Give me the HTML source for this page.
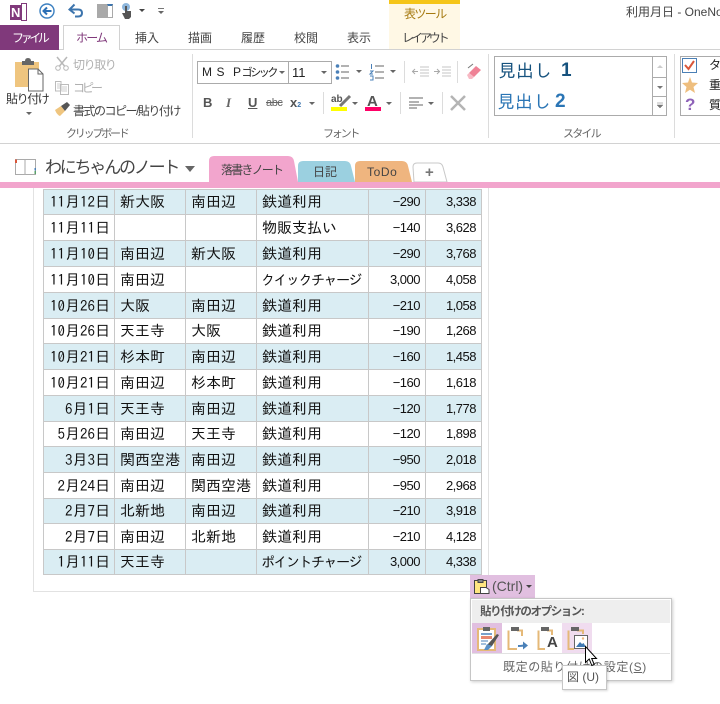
<!DOCTYPE html>
<html lang="ja"><head><meta charset="utf-8"><title>利用月日 - OneNote</title>
<style>
html,body{margin:0;padding:0;background:#fff}
#p{position:relative;width:720px;height:704px;overflow:hidden;background:#fff;font-family:"Liberation Sans","Noto Sans CJK JP",sans-serif;color:#444}
.a{position:absolute;white-space:nowrap}
.t{font-size:12px;line-height:16px}
.g{color:#b0b0b0}
.vl{position:absolute;width:1px;background:#dcdcdc}
.tri{position:absolute;width:0;height:0;border-left:3px solid transparent;border-right:3px solid transparent;border-top:3px solid #666}
svg{position:absolute;overflow:visible}
#tb{position:absolute;left:43px;top:189px;border-collapse:collapse;table-layout:fixed;width:438px;font-family:"IPAGothic","Noto Sans CJK JP",sans-serif;font-size:15px;color:#111}
#tb td{border:1px solid #c8c8c8;padding:0 0 0 5px;height:25px;box-sizing:border-box;white-space:nowrap;overflow:hidden;line-height:20px}
#tb tr{height:26px}#tb tr.s{height:25px}
#tb tr:nth-child(odd) td{background:#daedf3}
#tb td.d{text-align:right;padding:0 4px 0 0}
#tb td.n{text-align:right;padding:0 5px 0 0;font-family:"Liberation Sans",sans-serif;font-size:13px;letter-spacing:-.5px}
#tb td.k{font-size:14px;padding-left:4px;letter-spacing:-1.5px}
</style></head><body><div id="p">

<!-- QAT -->
<div class="a" style="left:10px;top:5px;width:15px;height:15px;background:#80397b"></div>
<div class="a" style="left:21px;top:3px;width:6px;height:18px;background:#fff;border:1px solid #80397b;box-sizing:border-box"></div>
<div class="a" style="left:11px;top:4px;font-size:13px;line-height:18px;font-weight:bold;color:#fff">N</div>
<svg style="left:39px;top:3px" width="17" height="17" viewBox="0 0 17 17"><circle cx="8" cy="8" r="7" fill="#fff" stroke="#3b7fc0" stroke-width="1.4"/><path d="M12.5 8H5M8 4.5 4.5 8 8 11.5" fill="none" stroke="#2b6fb5" stroke-width="2"/></svg>
<svg style="left:68px;top:3px" width="17" height="16" viewBox="0 0 17 16"><path d="M2 6.5H10Q14 6.500 14 10Q14 13.500 10 13.500H7" fill="none" stroke="#3c74ad" stroke-width="2"/><path d="M6.500 1.500 1.500 6.500 6.500 10.500" fill="none" stroke="#3c74ad" stroke-width="2"/></svg>
<div class="a" style="left:97px;top:4px;width:10px;height:14px;background:#a9a9a9"></div>
<div class="a" style="left:107px;top:4px;width:6px;height:14px;background:#fff;border:1px solid #a9a9a9;border-top:2px solid #3c74ad;box-sizing:border-box"></div>
<svg style="left:120px;top:2px" width="14" height="18" viewBox="0 0 14 18"><circle cx="6" cy="5" r="4" fill="#8db6dc"/><path d="M5 4H7V9H11V15L9 17H5L2 11H5Z" fill="#555"/></svg>
<div class="tri" style="left:139px;top:9px;border-top-color:#444"></div>
<div class="a" style="left:158px;top:8px;width:6px;height:1px;background:#777"></div>
<div class="tri" style="left:158px;top:11px"></div>

<!-- Context tab -->
<div class="a" style="left:389px;top:0;width:71px;height:50px;background:#fff8e5"></div>
<div class="a" style="left:389px;top:0;width:71px;height:4px;background:#f5c518"></div>
<div class="a t" style="left:404px;top:6px;color:#a5790f;letter-spacing:-1.6px">表ツール</div>
<div class="a t" style="left:402px;top:30px;color:#444;letter-spacing:-3.1px">レイアウト</div>
<div class="a" style="left:626px;top:4px;font-size:12px;line-height:17px;color:#444">利用月日 - OneNote</div>

<!-- Tabs -->
<div class="a" style="left:0;top:49px;width:720px;height:1px;background:#d2d2d2"></div>
<div class="a" style="left:0;top:25px;width:59px;height:25px;background:#80397b"></div>
<div class="a t" style="left:12px;top:30px;color:#fff;letter-spacing:-3.4px">ファイル</div>
<div class="a" style="left:63px;top:25px;width:57px;height:25px;background:#fff;border:1px solid #d2d2d2;border-bottom:none;box-sizing:border-box"></div>
<div class="a t" style="left:76px;top:30px;color:#80397b;letter-spacing:-1.8px">ホーム</div>
<div class="a t" style="left:135px;top:30px">挿入</div>
<div class="a t" style="left:188px;top:30px">描画</div>
<div class="a t" style="left:241px;top:30px">履歴</div>
<div class="a t" style="left:294px;top:30px">校閲</div>
<div class="a t" style="left:347px;top:30px">表示</div>

<!-- Clipboard group -->
<svg style="left:14px;top:57px" width="30" height="34" viewBox="0 0 30 34"><path d="M1 5H25V30H1Z" fill="#efc57f"/><path d="M8 4H11Q11 1 14 1Q17 1 17 4H20V8H8Z" fill="#666"/><path d="M14.500 15H24L29 20V37H14.500Z" transform="translate(0 -3)" fill="#fff" stroke="#666"/><path d="M24 12V17H29" fill="none" stroke="#666"/></svg>
<div class="a t" style="left:6px;top:91px;letter-spacing:-1.4px;color:#333">貼り付け</div>
<div class="tri" style="left:26px;top:112px"></div>
<svg style="left:55px;top:56px" width="14" height="15" viewBox="0 0 14 15"><path d="M2 1 9.500 10M12 1 4.500 10" stroke="#b8b8b8" stroke-width="1.500" fill="none"/><circle cx="3" cy="12" r="2.300" fill="#fff" stroke="#b8b8b8"/><circle cx="11" cy="12" r="2.300" fill="#fff" stroke="#b8b8b8"/></svg>
<div class="a t g" style="left:73px;top:57px;letter-spacing:-1.4px">切り取り</div>
<svg style="left:54px;top:81px" width="16" height="14" viewBox="0 0 16 14"><path d="M1.500.5H7V10H1.500ZM6.500 3.500H14.500V13.500H6.500Z" fill="#fff" stroke="#bbb"/><path d="M3 3H6M3 5H6M3 7H6M8 6H13M8 8H13M8 10H13" stroke="#ccc"/></svg>
<div class="a t g" style="left:73px;top:80px;letter-spacing:-3px">コピー</div>
<svg style="left:54px;top:102px" width="16" height="15" viewBox="0 0 16 15"><path d="M1 8 7 4 11 9 6 14Q3 13 1 8Z" fill="#efc57f"/><path d="M7 4 13 0 16 3 11 9Z" fill="#555"/></svg>
<div class="a t" style="left:73px;top:103px;letter-spacing:-1.5px;color:#444">書式のコピー/貼り付け</div>
<div class="a t" style="left:66px;top:126px;color:#666;font-size:11px;letter-spacing:-2.2px">クリップボード</div>
<div class="vl" style="left:192px;top:54px;height:84px"></div>

<!-- Font group -->
<div class="a" style="left:197px;top:61px;width:92px;height:23px;border:1px solid #ababab;box-sizing:border-box;background:#fff"></div>
<div class="a" style="left:288px;top:61px;width:44px;height:23px;border:1px solid #ababab;box-sizing:border-box;background:#fff"></div>
<div class="a" style="left:202px;top:64px;font-size:12px;line-height:17px;color:#222;white-space:pre;letter-spacing:.6px">M S  P<span style="font-size:11px;letter-spacing:-2.4px">ゴシック</span></div>
<div class="tri" style="left:279px;top:71px"></div>
<div class="a" style="left:292px;top:64px;font-size:13px;line-height:17px;color:#222">11</div>
<div class="tri" style="left:321px;top:71px"></div>
<svg style="left:335px;top:63px" width="30" height="18" viewBox="0 0 30 18"><g fill="#4a80b8"><circle cx="2.500" cy="3" r="1.800"/><circle cx="2.500" cy="9" r="1.800"/><circle cx="2.500" cy="15" r="1.800"/></g><path d="M6 3H14M6 9H14M6 15H14" stroke="#666"/><path d="M21 7H27L24 10Z" fill="#666"/></svg>
<svg style="left:369px;top:63px" width="30" height="18" viewBox="0 0 30 18"><path d="M2.500 1V6M1 8H4L1 11H4M1 13H4V17H1" stroke="#4a80b8" fill="none"/><path d="M6 3H15M6 9H15M6 15H15" stroke="#666"/><path d="M21 7H27L24 10Z" fill="#666"/></svg>
<div class="vl" style="left:404px;top:61px;height:22px"></div>
<svg style="left:412px;top:66px" width="40" height="12" viewBox="0 0 40 12"><path d="M8 1H17M8 4H17M8 7H17M8 10H17M30 1H39M30 4H39M30 7H39M30 10H39" stroke="#c4c4c4"/><path d="M6 5.500H0M3 3 .5 5.500 3 8" stroke="#aaa" fill="none"/><path d="M22 5.500H28M25 3 27.500 5.500 25 8" stroke="#aaa" fill="none"/></svg>
<div class="vl" style="left:457px;top:61px;height:22px"></div>
<svg style="left:466px;top:63px" width="16" height="17" viewBox="0 0 16 17"><path d="M7 1 2 5" stroke="#777" fill="none"/><path d="M3 10 10 3 15 7 8 14Z" fill="#ef8296"/><path d="M1 12 3 10 8 14 6 16H3Z" fill="#f7b9c4"/></svg>

<div class="a" style="left:203px;top:94px;font-size:13px;line-height:17px;font-weight:bold;color:#555">B</div>
<div class="a" style="left:226px;top:94px;font-size:13px;line-height:17px;font-style:italic;font-weight:bold;font-family:'Liberation Serif',serif;color:#666">I</div>
<div class="a" style="left:248px;top:94px;font-size:13px;line-height:17px;font-weight:bold;color:#555;text-decoration:underline">U</div>
<div class="a" style="left:266px;top:96px;font-size:11px;line-height:15px;color:#666;text-decoration:line-through;letter-spacing:-.4px">abc</div>
<div class="a" style="left:290px;top:94px;font-size:13px;line-height:17px;font-weight:bold;color:#555">x<span style="font-size:7px;color:#3c74ad">2</span></div>
<div class="tri" style="left:309px;top:102px"></div>
<div class="vl" style="left:323px;top:92px;height:22px"></div>
<div class="a" style="left:331px;top:94px;font-size:10px;line-height:12px;color:#555;font-weight:bold">ab</div>
<svg style="left:339px;top:95px" width="14" height="12" viewBox="0 0 14 12"><path d="M1 11 11 1" stroke="#777" stroke-width="3"/></svg>
<div class="a" style="left:331px;top:107px;width:16px;height:4px;background:#ff0"></div>
<div class="tri" style="left:352px;top:102px"></div>
<div class="a" style="left:367px;top:93px;font-size:15px;line-height:17px;font-weight:bold;color:#555">A</div>
<div class="a" style="left:365px;top:107px;width:16px;height:4px;background:#ff0066"></div>
<div class="tri" style="left:386px;top:102px"></div>
<div class="vl" style="left:400px;top:92px;height:22px"></div>
<svg style="left:409px;top:97px" width="16" height="12" viewBox="0 0 16 12"><path d="M0 1H14M0 5H10M0 8H14M0 11H8" stroke="#666"/></svg>
<div class="tri" style="left:428px;top:102px"></div>
<div class="vl" style="left:442px;top:92px;height:22px"></div>
<svg style="left:450px;top:95px" width="16" height="16" viewBox="0 0 16 16"><path d="M1 1 15 15M15 1 1 15" stroke="#b4b4b4" stroke-width="2.500"/></svg>
<div class="a" style="left:323px;top:127px;font-size:11px;line-height:15px;color:#666;letter-spacing:-2.2px">フォント</div>
<div class="vl" style="left:488px;top:54px;height:84px"></div>

<!-- Styles -->
<div class="a" style="left:494px;top:56px;width:173px;height:60px;border:1px solid #ababab;box-sizing:border-box;background:#fff"></div>
<div class="a" style="left:652px;top:56px;width:1px;height:60px;background:#ababab"></div>
<div class="a" style="left:653px;top:77px;width:14px;height:1px;background:#ababab"></div>
<div class="a" style="left:653px;top:96px;width:14px;height:1px;background:#ababab"></div>
<svg style="left:656px;top:64px" width="8" height="46" viewBox="0 0 8 46"><path d="M1 4H7L4 1Z" fill="#ccc"/><path d="M1 22H7L4 25Z" fill="#777"/><path d="M1 39H7M1 41H7L4 44Z" fill="#777" stroke="#777" stroke-width=".5"/></svg>
<div class="a" style="left:498px;top:58px;font-size:18px;line-height:26px;color:#16527e;font-family:'IPAGothic','Noto Sans CJK JP',sans-serif">見出し</div>
<div class="a" style="left:561px;top:58px;font-size:19px;line-height:26px;font-weight:bold;color:#16527e">1</div>
<div class="a" style="left:497px;top:89px;font-size:18px;line-height:26px;color:#2a75b5;font-family:'IPAGothic','Noto Sans CJK JP',sans-serif">見出し</div>
<div class="a" style="left:555px;top:89px;font-size:19px;line-height:26px;font-weight:bold;color:#2a75b5">2</div>
<div class="a" style="left:563px;top:127px;font-size:11px;line-height:15px;color:#666;letter-spacing:-1.8px">スタイル</div>
<div class="vl" style="left:674px;top:54px;height:84px"></div>

<!-- Tags -->
<div class="a" style="left:680px;top:56px;width:50px;height:60px;border:1px solid #ababab;box-sizing:border-box;background:#fff"></div>
<svg style="left:682px;top:58px" width="16" height="16" viewBox="0 0 16 16"><rect x=".5" y=".5" width="14" height="14" fill="#fff" stroke="#4a7fb5"/><path d="M3 7 6.500 11 12 3" fill="none" stroke="#d9573a" stroke-width="2"/></svg>
<svg style="left:682px;top:77px" width="16" height="16" viewBox="0 0 16 16"><path d="M8 0 10 5.500 16 6 11.500 10 13 16 8 12.700 3 16 4.500 10 0 6 6 5.500Z" fill="#eebe7e"/></svg>
<div class="a" style="left:685px;top:96px;font-size:17px;line-height:18px;font-weight:bold;color:#8e62b8">?</div>
<div class="a t" style="left:709px;top:57px;color:#222">タグ</div>
<div class="a t" style="left:709px;top:77px;color:#222">重要</div>
<div class="a t" style="left:709px;top:97px;color:#222">質問</div>

<div class="a" style="left:0;top:143px;width:720px;height:1px;background:#d2d2d2"></div>

<!-- Notebook bar -->
<svg style="left:14px;top:158px" width="23" height="18" viewBox="0 0 23 18"><path d="M1.500 1.500H10.500L11 2 11.500 1.500H21.500V16.500H11.500L11 16 10.500 16.500H1.500Z" fill="#fff" stroke="#aaa"/><path d="M11 2V16" stroke="#aaa"/><path d="M1 1.500H3V5H1Z" fill="#d9573a"/><path d="M20.500 10H22V12.500H20.500Z" fill="#4a80b8"/><path d="M20.500 13H22V16H20.500Z" fill="#5aa06a"/></svg>
<div class="a" style="left:45px;top:155px;font-size:17px;line-height:26px;color:#444;letter-spacing:-2.2px">わにちゃんのノート</div>
<div class="a" style="left:185px;top:166px;width:0;height:0;border-left:5px solid transparent;border-right:5px solid transparent;border-top:6px solid #666"></div>

<svg style="left:205px;top:155px" width="250" height="33" viewBox="0 0 250 33">
<path d="M242 27 238 12Q237 8 233 8H212Q208 8 208 12L209 27Z" fill="#fff" stroke="#c8c8c8"/>
<path d="M150 27V11Q150 6 155 6H197Q202 6 203 11L207 27Z" fill="#efb57f"/>
<path d="M93 27V11Q93 6 98 6H140Q145 6 146 11L150 27Z" fill="#9bd0e0"/>
<path d="M4 27V6Q4 1 9 1H83Q88 1 89 6L93 27Z" fill="#f2a5cd"/>
</svg>
<div class="a" style="left:221px;top:162px;font-size:12px;line-height:16px;color:#444;letter-spacing:-1.8px">落書きノート</div>
<div class="a" style="left:313px;top:164px;font-size:12px;line-height:16px;color:#444">日記</div>
<div class="a" style="left:367px;top:164px;font-size:12px;line-height:16px;color:#444;letter-spacing:.6px">ToDo</div>
<div class="a" style="left:425px;top:164px;font-size:15px;line-height:17px;font-weight:bold;color:#777">+</div>
<div class="a" style="left:0;top:182px;width:720px;height:6px;background:#f2a5cd"></div>

<!-- Page outline -->
<div class="a" style="left:33px;top:188px;width:1px;height:404px;background:#e2e2e2"></div>
<div class="a" style="left:33px;top:591px;width:437px;height:1px;background:#e2e2e2"></div>
<div class="a" style="left:488px;top:188px;width:1px;height:387px;background:#e2e2e2"></div>

<table id="tb"><colgroup><col style="width:71px"><col style="width:71px"><col style="width:71px"><col style="width:112px"><col style="width:57px"><col style="width:56px"></colgroup>
<tr class="s"><td class="d">11月12日</td><td>新大阪</td><td>南田辺</td><td>鉄道利用</td><td class="n">−290</td><td class="n">3,338</td></tr>
<tr><td class="d">11月11日</td><td></td><td></td><td>物販支払い</td><td class="n">−140</td><td class="n">3,628</td></tr>
<tr><td class="d">11月10日</td><td>南田辺</td><td>新大阪</td><td>鉄道利用</td><td class="n">−290</td><td class="n">3,768</td></tr>
<tr><td class="d">11月10日</td><td>南田辺</td><td></td><td class="k">クイックチャージ</td><td class="n">3,000</td><td class="n">4,058</td></tr>
<tr><td class="d">10月26日</td><td>大阪</td><td>南田辺</td><td>鉄道利用</td><td class="n">−210</td><td class="n">1,058</td></tr>
<tr class="s"><td class="d">10月26日</td><td>天王寺</td><td>大阪</td><td>鉄道利用</td><td class="n">−190</td><td class="n">1,268</td></tr>
<tr><td class="d">10月21日</td><td>杉本町</td><td>南田辺</td><td>鉄道利用</td><td class="n">−160</td><td class="n">1,458</td></tr>
<tr><td class="d">10月21日</td><td>南田辺</td><td>杉本町</td><td>鉄道利用</td><td class="n">−160</td><td class="n">1,618</td></tr>
<tr><td class="d">6月1日</td><td>天王寺</td><td>南田辺</td><td>鉄道利用</td><td class="n">−120</td><td class="n">1,778</td></tr>
<tr class="s"><td class="d">5月26日</td><td>南田辺</td><td>天王寺</td><td>鉄道利用</td><td class="n">−120</td><td class="n">1,898</td></tr>
<tr><td class="d">3月3日</td><td>関西空港</td><td>南田辺</td><td>鉄道利用</td><td class="n">−950</td><td class="n">2,018</td></tr>
<tr><td class="d">2月24日</td><td>南田辺</td><td>関西空港</td><td>鉄道利用</td><td class="n">−950</td><td class="n">2,968</td></tr>
<tr class="s"><td class="d">2月7日</td><td>北新地</td><td>南田辺</td><td>鉄道利用</td><td class="n">−210</td><td class="n">3,918</td></tr>
<tr><td class="d">2月7日</td><td>南田辺</td><td>北新地</td><td>鉄道利用</td><td class="n">−210</td><td class="n">4,128</td></tr>
<tr class="s"><td class="d">1月11日</td><td>天王寺</td><td></td><td class="k">ポイントチャージ</td><td class="n">3,000</td><td class="n">4,338</td></tr>
</table>

<!-- Ctrl button -->
<div class="a" style="left:470px;top:575px;width:65px;height:23px;background:#e1bfe0"></div>
<svg style="left:474px;top:578px" width="16" height="17" viewBox="0 0 16 17"><path d="M.5 2.500H12.500V15.500H.5Z" fill="#ffe680" stroke="#444"/><path d="M4 1.500H9V4.500H4Z" fill="#888" stroke="#444"/><path d="M6.500 9.500H12L15 11.500V15.500H6.500Z" fill="#fff" stroke="#444"/></svg>
<div class="a" style="left:492px;top:578px;font-size:14px;line-height:17px;color:#555">(Ctrl)</div>
<div class="tri" style="left:526px;top:585px;border-top-color:#444"></div>

<!-- Popup -->
<div class="a" style="left:470px;top:598px;width:202px;height:83px;background:#fff;border:1px solid #c6c6c6;box-sizing:border-box;box-shadow:1px 1px 3px rgba(0,0,0,.2)"></div>
<div class="a" style="left:472px;top:600px;width:198px;height:23px;background:#eee"></div>
<div class="a" style="left:480px;top:604px;font-size:11.500px;line-height:16px;font-weight:bold;color:#555;letter-spacing:-1.4px">貼り付けのオプション:</div>
<div class="a" style="left:472px;top:623px;width:30px;height:30px;background:#e1bfe0"></div>
<div class="a" style="left:562px;top:623px;width:30px;height:30px;background:#f0dcef"></div>
<div class="a" style="left:472px;top:653px;width:198px;height:1px;background:#e2e2e2"></div>
<svg style="left:477px;top:626px" width="22" height="25" viewBox="0 0 22 25"><rect x="1" y="3" width="17" height="21" fill="#fff" stroke="#e5b978" stroke-width="2"/><path d="M6 1H13V5H6Z" fill="#666"/><path d="M4 8H15" stroke="#4a80b8" stroke-width="1.500"/><path d="M4 10H15V13H4Z" fill="#e7876f"/><path d="M4 15H11M4 18H9" stroke="#4a80b8"/><path d="M9 23 11 18 20 8 22 9 15 20Z" fill="#555"/><path d="M7 24 10 18 15 20 11 24Z" fill="#5a90c5"/></svg>
<svg style="left:507px;top:626px" width="22" height="25" viewBox="0 0 22 25"><path d="M1.500 4.500V23H10M15 10V4.500H10" fill="none" stroke="#e5b978" stroke-width="2"/><path d="M4 1H12V5H4Z" fill="#666"/><path d="M11 20Q16 20 18 19" fill="none" stroke="#4a80b8" stroke-width="2"/><path d="M16 15.500 21 19.500 16 23.500Z" fill="#4a80b8"/></svg>
<svg style="left:537px;top:626px" width="22" height="25" viewBox="0 0 22 25"><path d="M1.500 4.500V23H8M15 9V4.500H10" fill="none" stroke="#e5b978" stroke-width="2"/><path d="M4 1H12V5H4Z" fill="#666"/></svg>
<div class="a" style="left:547px;top:634px;font-size:15px;line-height:17px;font-weight:bold;color:#444">A</div>
<svg style="left:567px;top:626px" width="22" height="25" viewBox="0 0 22 25"><path d="M1.500 4.500V23H7M16 8V4.500H10" fill="none" stroke="#e5b978" stroke-width="2"/><path d="M4 1H12V5H4Z" fill="#666"/><rect x="7.500" y="9.500" width="13" height="13" fill="#fff" stroke="#666"/><path d="M9 21 13 16 15 18 16.500 17 19 21Z" fill="#3e78b2"/><circle cx="16" cy="12.500" r="1.200" fill="#efb57f"/></svg>
<div class="a" style="left:503px;top:659px;font-size:12px;line-height:16px;color:#666;letter-spacing:.6px">既定の貼り付けの設定(<u>S</u>)</div>

<!-- Tooltip -->
<div class="a" style="left:562px;top:665px;width:45px;height:25px;background:#fff;border:1px solid #c6c6c6;box-sizing:border-box;box-shadow:1px 1px 2px rgba(0,0,0,.15)"></div>
<div class="a" style="left:567px;top:669px;font-size:12px;line-height:16px;color:#555">図 (U)</div>

<!-- Cursor -->
<svg style="left:585px;top:646px" width="13" height="22" viewBox="0 0 13 22"><path d="M.5 .5V16.500L4.200 13 6.800 19.500 9.200 18.500 6.700 12.500H11.500Z" fill="#fff" stroke="#000"/></svg>

</div></body></html>
